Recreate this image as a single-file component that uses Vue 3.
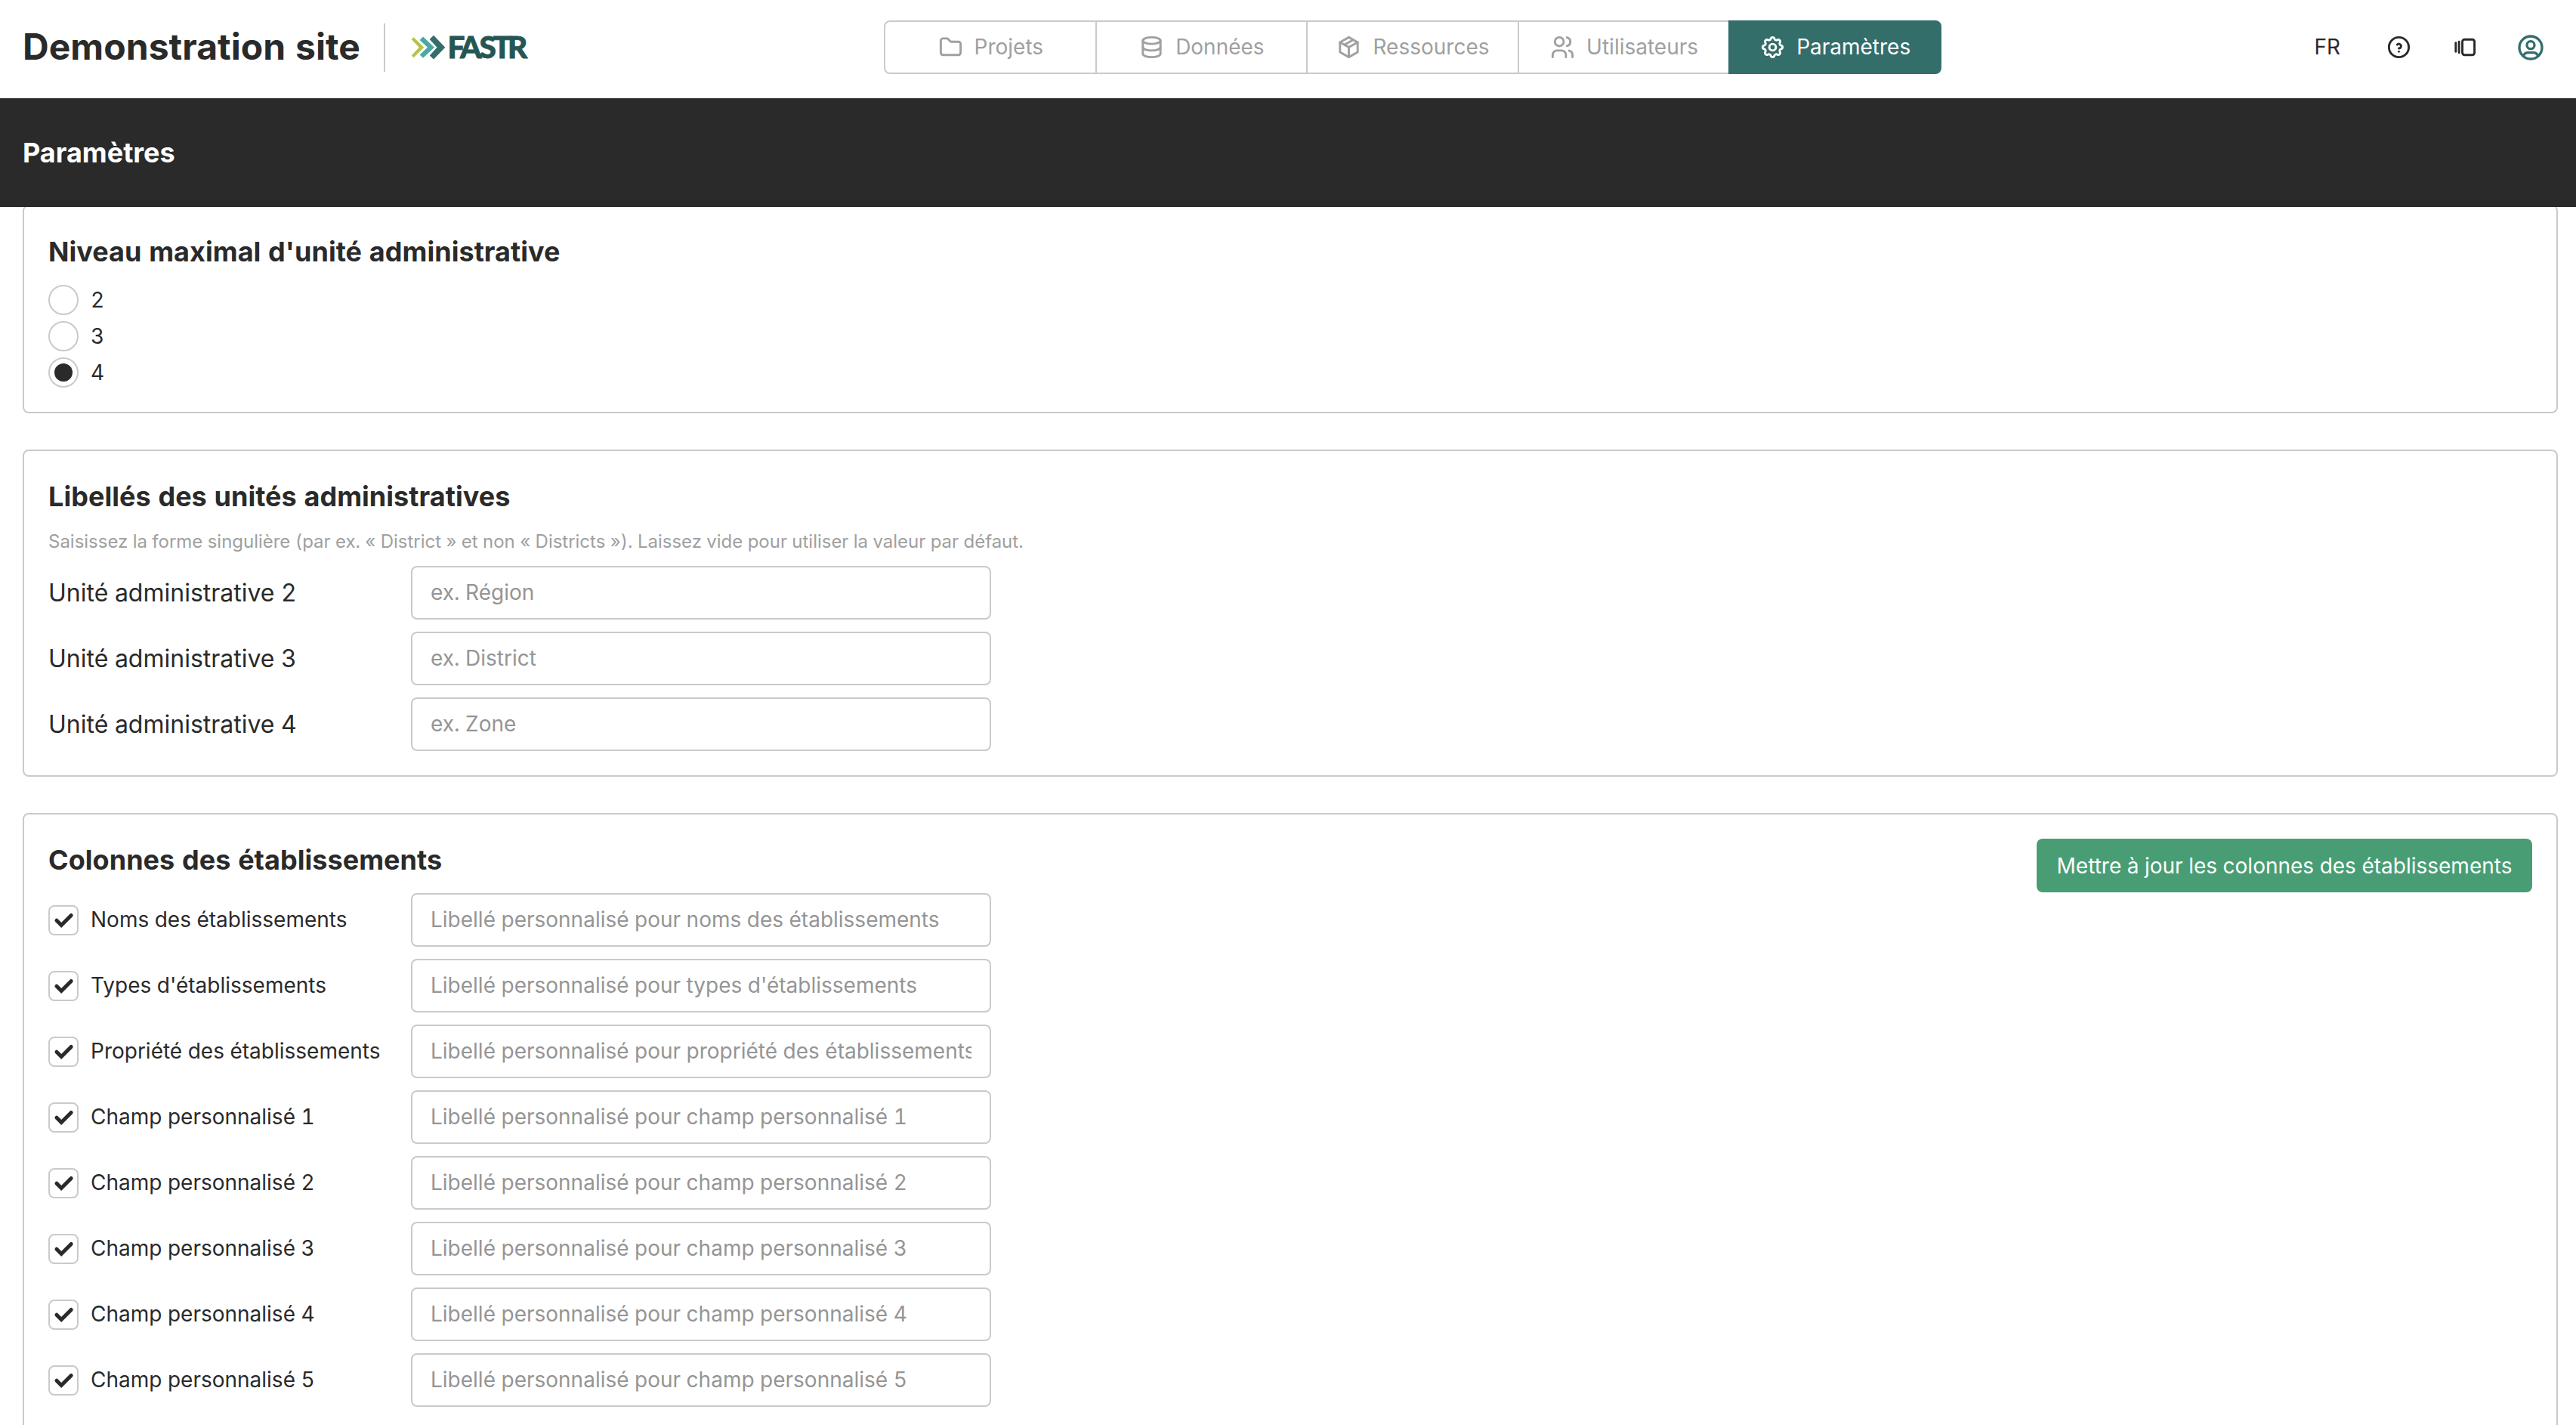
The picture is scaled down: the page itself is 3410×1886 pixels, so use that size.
<template>
  <div class="page">
    <header class="topbar">
      <div class="brand">
        <div class="site-name">Demonstration site</div>
        <div class="divider"></div>
        <svg class="logo" viewBox="0 0 160 36">
          <path class="lime" d="M3.500 4.200L17.300 17.800L3.500 31.200L0.700 28.400L10.800 17.800L0.700 7.200z" />
          <path class="aqua" d="M16 3.500L31 17.800L16 31.800L11.700 27.500L22 17.800L11.700 8z" />
          <path class="teal" d="M30 1.800L45.300 17.800L30 33.500L24.700 28.500L34.500 17.800L24.700 7z" />
          <text class="logo-text" x="48.5 65 90.5 108.5 128" y="31.500">FASTR</text>
        </svg>
      </div>

      <nav class="tabs">
        <button
          v-for="tab in tabs"
          :key="tab.label"
          :class="['tab', tab.label === activeTab ? 'active' : '']"
          @click="activeTab = tab.label"
        >
          <svg class="icon" viewBox="0 0 24 24">
            <path v-for="d in tab.paths" :key="d" :d="d" />
          </svg>
          <span>{{ tab.label }}</span>
        </button>
      </nav>

      <div class="actions">
        <span class="lang">FR</span>
        <svg class="icon help" viewBox="0 0 24 24">
          <path d="M3 12a9 9 0 1 0 18 0a9 9 0 0 0 -18 0" />
          <path d="M12 16v.01" />
          <path d="M12 13a2 2 0 0 0 .914 -3.782a1.98 1.98 0 0 0 -2.414 .483" />
        </svg>
        <svg class="icon versions" viewBox="0 0 24 24">
          <path d="M10 7a2 2 0 0 1 2 -2h7a2 2 0 0 1 2 2v10a2 2 0 0 1 -2 2h-7a2 2 0 0 1 -2 -2z" />
          <path d="M7 7v10" />
          <path d="M4 8v8" />
        </svg>
        <svg class="icon user" viewBox="0 0 24 24">
          <path d="M3 12a9 9 0 1 0 18 0a9 9 0 1 0 -18 0" />
          <path d="M9 10a3 3 0 1 0 6 0a3 3 0 1 0 -6 0" />
          <path d="M6.168 18.849a4 4 0 0 1 3.832 -2.849h4a4 4 0 0 1 3.834 2.855" />
        </svg>
      </div>
    </header>

    <div class="heading">Paramètres</div>

    <main class="content">
      <section class="card">
        <h2>Niveau maximal d'unité administrative</h2>
        <div class="radios">
          <label v-for="level in [2, 3, 4]" :key="level" class="option">
            <input v-model="maxLevel" type="radio" :value="level" />
            <span class="radio"></span>
            <span>{{ level }}</span>
          </label>
        </div>
      </section>

      <section class="card">
        <h2>Libellés des unités administratives</h2>
        <p class="hint">
          Saisissez la forme singulière (par ex. « District » et non « Districts »). Laissez vide pour utiliser la valeur par défaut.
        </p>
        <div class="rows">
          <div v-for="unit in units" :key="unit.label" class="row">
            <span class="unit-label">{{ unit.label }}</span>
            <input v-model="unit.value" class="field" type="text" :placeholder="unit.placeholder" />
          </div>
        </div>
      </section>

      <section class="card split">
        <div>
          <h2>Colonnes des établissements</h2>
          <div class="rows">
            <div v-for="col in columns" :key="col.label" class="row">
              <label class="option column-label">
                <input v-model="col.checked" type="checkbox" />
                <span class="checkbox">
                  <svg v-if="col.checked" class="check" viewBox="0 0 36 36">
                    <path d="M9 18.200l6.200 6.300l13 -13" />
                  </svg>
                </span>
                <span>{{ col.label }}</span>
              </label>
              <input
                v-model="col.value"
                class="field"
                type="text"
                :placeholder="'Libellé personnalisé pour ' + col.label.toLowerCase()"
              />
            </div>
          </div>
        </div>
        <button class="update">Mettre à jour les colonnes des établissements</button>
      </section>
    </main>
  </div>
</template>

<script setup>
import { reactive, ref } from "vue";

const activeTab = ref("Paramètres");
const maxLevel = ref(4);

const tabs = [
  {
    label: "Projets",
    paths: ["M5 4h4l3 3h7a2 2 0 0 1 2 2v8a2 2 0 0 1 -2 2h-14a2 2 0 0 1 -2 -2v-11a2 2 0 0 1 2 -2"],
  },
  {
    label: "Données",
    paths: [
      "M4 6a8 3 0 1 0 16 0a8 3 0 1 0 -16 0",
      "M4 6v6a8 3 0 0 0 16 0v-6",
      "M4 12v6a8 3 0 0 0 16 0v-6",
    ],
  },
  {
    label: "Ressources",
    paths: [
      "M12 3l8 4.5v9l-8 4.5l-8 -4.5v-9l8 -4.5",
      "M12 12l8 -4.5",
      "M12 12v9",
      "M12 12l-8 -4.5",
      "M16 5.25l-8 4.5",
    ],
  },
  {
    label: "Utilisateurs",
    paths: [
      "M5 7a4 4 0 1 0 8 0a4 4 0 1 0 -8 0",
      "M3 21v-2a4 4 0 0 1 4 -4h4a4 4 0 0 1 4 4v2",
      "M16 3.13a4 4 0 0 1 0 7.75",
      "M21 21v-2a4 4 0 0 0 -3 -3.85",
    ],
  },
  {
    label: "Paramètres",
    paths: [
      "M10.325 4.317c.426 -1.756 2.924 -1.756 3.35 0a1.724 1.724 0 0 0 2.573 1.066c1.543 -.94 3.31 .826 2.37 2.37a1.724 1.724 0 0 0 1.065 2.572c1.756 .426 1.756 2.924 0 3.35a1.724 1.724 0 0 0 -1.066 2.573c.94 1.543 -.826 3.31 -2.37 2.37a1.724 1.724 0 0 0 -2.572 1.065c-.426 1.756 -2.924 1.756 -3.35 0a1.724 1.724 0 0 0 -2.573 -1.066c-1.543 .94 -3.31 -.826 -2.37 -2.37a1.724 1.724 0 0 0 -1.065 -2.572c-1.756 -.426 -1.756 -2.924 0 -3.35a1.724 1.724 0 0 0 1.066 -2.573c-.94 -1.543 .826 -3.31 2.37 -2.37c1 .608 2.296 .07 2.572 -1.065z",
      "M9 12a3 3 0 1 0 6 0a3 3 0 0 0 -6 0",
    ],
  },
];

const units = reactive([
  { label: "Unité administrative 2", placeholder: "ex. Région", value: "" },
  { label: "Unité administrative 3", placeholder: "ex. District", value: "" },
  { label: "Unité administrative 4", placeholder: "ex. Zone", value: "" },
]);

const columns = reactive(
  [
    "Noms des établissements",
    "Types d'établissements",
    "Propriété des établissements",
    "Champ personnalisé 1",
    "Champ personnalisé 2",
    "Champ personnalisé 3",
    "Champ personnalisé 4",
    "Champ personnalisé 5",
  ].map((label) => ({ label, checked: true, value: "" }))
);
</script>

<style>
body {
  background: #fff;
  overflow: hidden;
}
</style>

<style scoped>
.page {
  display: flex;
  flex-direction: column;
  height: 1886px;
  overflow: hidden;
  box-sizing: border-box;
  color: #2a2a2a;
  font-family: Inter, "Liberation Sans", sans-serif;
  font-size: 28px;
  font-variant-numeric: tabular-nums;
  line-height: 1.25;
}
.page *,
.page *::before {
  box-sizing: border-box;
}

button,
input {
  font: inherit;
  font-variant-numeric: tabular-nums;
}

.icon {
  width: 35px;
  height: 35px;
  flex: none;
  fill: none;
  stroke: currentColor;
  stroke-width: 2;
  stroke-linecap: round;
  stroke-linejoin: round;
}

.topbar {
  display: flex;
  align-items: center;
  flex: none;
  height: 130px;
  padding: 0 40px 5px 30px;
}
.brand {
  display: flex;
  align-items: center;
  width: 1140px;
}
.site-name {
  width: 478px;
  padding-bottom: 2px;
  font-size: 48px;
  font-weight: 700;
  letter-spacing: 0.05px;
  white-space: nowrap;
}
.divider {
  width: 2px;
  height: 64px;
  background: #cacaca;
}
.logo {
  width: 160px;
  height: 36px;
  margin-left: 34px;
  overflow: visible;
}
.lime {
  fill: #b5c34b;
}
.aqua {
  fill: #4aa7a4;
}
.teal {
  fill: #336e6b;
}
.logo-text {
  fill: #265653;
  stroke: #265653;
  stroke-width: 0.8;
  font-family: Lato, sans-serif;
  font-size: 40.5px;
  font-weight: 900;
}

.tabs {
  display: flex;
  width: 1400px;
}
.tab {
  display: flex;
  align-items: center;
  justify-content: center;
  gap: 14px;
  flex: 1 1 0;
  height: 71px;
  padding: 0;
  border: 2px solid #cacaca;
  background: #fff;
  color: #a0a0a0;
}
.tab + .tab {
  margin-left: -2px;
}
.tab:first-child {
  border-radius: 8px 0 0 8px;
}
.tab:last-child {
  border-radius: 0 8px 8px 0;
}
.tab.active {
  border-color: #336e6b;
  background: #336e6b;
  color: #fff;
}

.actions {
  display: flex;
  align-items: center;
  margin-left: auto;
}
.help {
  margin-left: 60px;
}
.versions {
  margin-left: 52px;
}
.user {
  width: 40px;
  height: 40px;
  margin-left: 50px;
  color: #336e6b;
}

.heading {
  display: flex;
  align-items: center;
  flex: none;
  height: 144px;
  padding-left: 30px;
  background: #2a2a2a;
  color: #fff;
  font-size: 36px;
  font-weight: 700;
}

.content {
  display: flex;
  flex-direction: column;
  gap: 48px;
  flex: 1;
  min-height: 0;
  padding: 0 24px 0 30px;
  overflow: hidden;
}
.card {
  flex: none;
  padding: 32px;
  border: 2px solid #cacaca;
  border-radius: 8px;
}
/* the list is scrolled a little, so the first card starts under the heading */
.card:first-child {
  margin-top: -3px;
}
h2 {
  margin: 0 0 16px;
  font-size: 36px;
  font-weight: 700;
  letter-spacing: 0.04px;
  line-height: 56px;
}
.hint {
  margin: 0 0 16px;
  color: #a0a0a0;
  font-size: 24px;
  letter-spacing: -0.017px;
  line-height: 32px;
}

.option {
  display: flex;
  align-items: center;
  gap: 16px;
}
.option input {
  display: none;
}
.radios {
  display: flex;
  flex-direction: column;
  gap: 8px;
}
.radio {
  display: flex;
  align-items: center;
  justify-content: center;
  width: 40px;
  height: 40px;
  border: 2px solid #cacaca;
  border-radius: 50%;
}
.option input:checked + .radio::before {
  content: "";
  width: 24px;
  height: 24px;
  border-radius: 50%;
  background: #2a2a2a;
}
.checkbox {
  display: flex;
  align-items: center;
  justify-content: center;
  width: 40px;
  height: 40px;
  border: 2px solid #cacaca;
  border-radius: 8px;
}
.check {
  width: 36px;
  height: 36px;
  fill: none;
  stroke: #2a2a2a;
  stroke-width: 5;
  stroke-linecap: round;
  stroke-linejoin: miter;
}

.rows {
  display: flex;
  flex-direction: column;
  gap: 16px;
}
.row {
  display: flex;
  align-items: center;
}
.unit-label,
.column-label {
  width: 480px;
  white-space: nowrap;
}
.unit-label {
  font-size: 32px;
}
.field {
  width: 768px;
  height: 71px;
  padding: 0 24px 1px;
  border: 2px solid #cacaca;
  border-radius: 8px;
  outline: none;
  background: #fff;
  color: #2a2a2a;
}
.field::placeholder {
  color: #959595;
  opacity: 1;
}

.split {
  display: flex;
  align-items: flex-start;
  justify-content: space-between;
}
.update {
  width: 656px;
  height: 71px;
  padding: 1px 0 0;
  border: none;
  border-radius: 8px;
  background: #489d75;
  color: #fff;
  white-space: nowrap;
}
</style>
